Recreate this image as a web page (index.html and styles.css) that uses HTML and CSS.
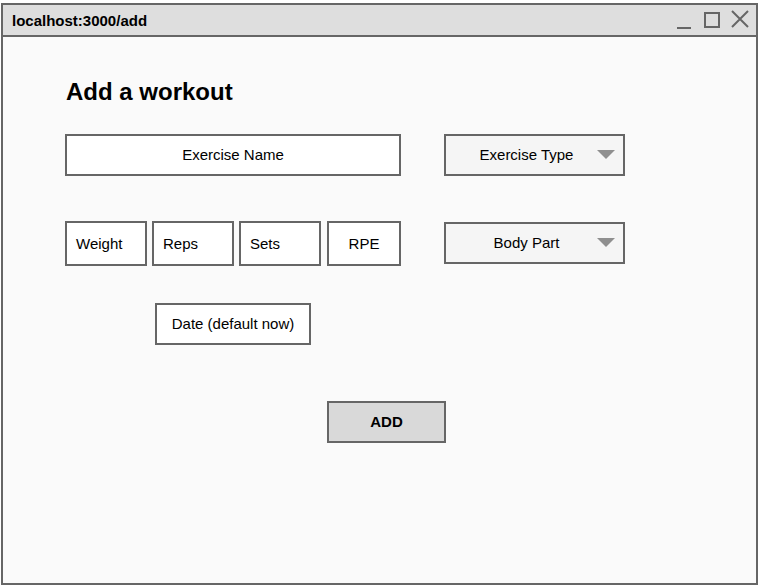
FILE: index.html
```html
<!DOCTYPE html>
<html>
<head>
<meta charset="utf-8">
<link rel="stylesheet" href="styles.css">
</head>
<body>
<div class="window">
  <div class="titlebar">
    <span class="url">localhost:3000/add</span>
    <div class="controls">
      <svg class="ic-min" width="16" height="16" viewBox="0 0 16 16"><line x1="1" y1="14" x2="15" y2="14" stroke="#666" stroke-width="2"/></svg>
      <svg class="ic-max" width="16" height="16" viewBox="0 0 16 16"><rect x="1" y="1" width="14" height="14" fill="none" stroke="#666" stroke-width="2"/></svg>
      <svg class="ic-close" width="18" height="18" viewBox="0 0 18 18"><path d="M1 1 L17 17 M17 1 L1 17" stroke="#666" stroke-width="2" fill="none"/></svg>
    </div>
  </div>
  <div class="content">
    <h1 class="heading">Add a workout</h1>
    <div class="row row1">
      <div class="left">
        <div class="box box-name">Exercise Name</div>
      </div>
      <div class="select">
        <span class="select-label">Exercise Type</span>
        <span class="caret"></span>
      </div>
    </div>
    <div class="row row2">
      <div class="left small-row">
        <div class="box box-sm">Weight</div>
        <div class="box box-sm">Reps</div>
        <div class="box box-sm">Sets</div>
        <div class="box box-rpe">RPE</div>
      </div>
      <div class="select select-body">
        <span class="select-label">Body Part</span>
        <span class="caret"></span>
      </div>
    </div>
    <div class="date-row">
      <div class="box box-date">Date (default now)</div>
    </div>
    <div class="add-row">
      <div class="btn-add">ADD</div>
    </div>
  </div>
</div>
</body>
</html>
```

FILE: styles.css
```css
* { box-sizing: border-box; }
html, body { margin: 0; padding: 0; background: #ffffff; }
body { font-family: "Liberation Sans", Arial, sans-serif; color: #000; }

.window {
  margin: 3px 0 0 1px;
  width: 757px;
  height: 582px;
  border: 2px solid #666666;
  background: #fafafa;
  display: flex;
  flex-direction: column;
}

.titlebar {
  height: 32px;
  flex: none;
  background: #dedede;
  border-bottom: 2px solid #666666;
  display: flex;
  align-items: center;
  padding: 0 7px 0 9px;
}
.url { font-weight: bold; font-size: 15px; }
.controls { margin-left: auto; display: flex; align-items: center; }
.ic-min { margin-top: 4px; margin-right: 12px; }
.ic-max { margin-top: -1px; margin-right: 11px; }
.ic-close { margin-top: -2px; }

.content { padding: 0 0 0 62px; }

.heading {
  margin: 41px 0 0 1px;
  font-size: 24px;
  font-weight: bold;
  line-height: 28px;
}

.row { display: flex; gap: 43px; }
.row1 { margin-top: 28px; }
.row2 { margin-top: 45px; }
.left { width: 336px; }

.box {
  border: 2px solid #666666;
  background: #ffffff;
  font-size: 15px;
  display: flex;
  align-items: center;
  justify-content: center;
  padding-bottom: 1px;
}
.box-name { height: 42px; width: 336px; }

.small-row { display: flex; gap: 5px; }
.box-sm { width: 82px; height: 45px; justify-content: flex-start; padding-left: 9px; }
.box-rpe { width: 74px; height: 45px; margin-left: 1px; }

.select {
  width: 181px;
  height: 42px;
  border: 2px solid #666666;
  background: #f5f5f5;
  font-size: 15px;
  display: flex;
  align-items: center;
  position: relative;
  padding-bottom: 1px;
}
.select-body { margin-top: 1px; }
.select-label { flex: 1; text-align: center; padding-right: 16px; }
.caret {
  position: absolute;
  right: 8px;
  top: 14px;
  width: 0; height: 0;
  border-left: 9px solid transparent;
  border-right: 9px solid transparent;
  border-top: 9px solid #8f8f8f;
}

.date-row { margin-top: 37px; padding-left: 90px; }
.box-date { width: 156px; height: 42px; }

.add-row { margin-top: 56px; padding-left: 262px; }
.btn-add {
  width: 119px;
  height: 42px;
  border: 2px solid #666666;
  background: #d9d9d9;
  font-size: 15px;
  font-weight: bold;
  display: flex;
  align-items: center;
  justify-content: center;
  padding-bottom: 1px;
}
```
